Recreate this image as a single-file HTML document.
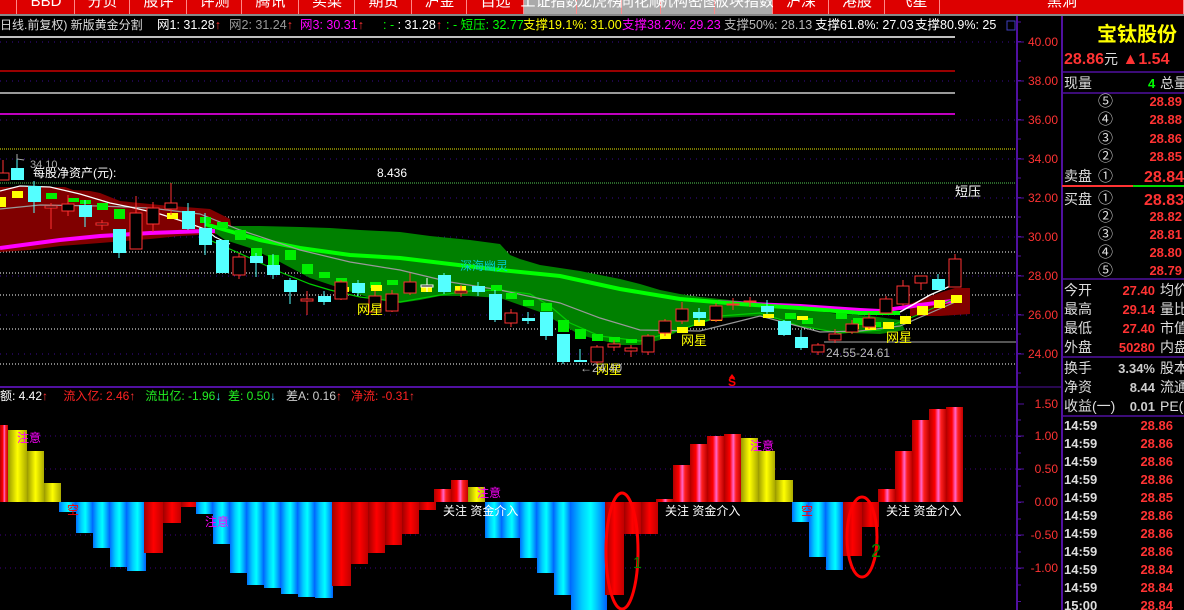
<!DOCTYPE html>
<html><head><meta charset="utf-8"><style>
html,body{margin:0;padding:0;background:#000;width:1184px;height:610px;overflow:hidden}
svg{display:block}
text{font-family:"Liberation Sans","Noto Sans CJK SC",sans-serif}
</style></head><body>
<svg id="s" width="1184" height="610" xmlns="http://www.w3.org/2000/svg">
<defs>
<linearGradient id="gr" x1="0" x2="1" y1="0" y2="0">
<stop offset="0" stop-color="#b00000"/><stop offset="0.35" stop-color="#ff0000"/><stop offset="0.55" stop-color="#ff66cc"/><stop offset="0.7" stop-color="#ff2020"/><stop offset="1" stop-color="#c00000"/></linearGradient>
<linearGradient id="gr2" x1="0" x2="1" y1="0" y2="0">
<stop offset="0" stop-color="#a00000"/><stop offset="0.5" stop-color="#ff0000"/><stop offset="1" stop-color="#c00000"/></linearGradient>
<linearGradient id="gb" x1="0" x2="1" y1="0" y2="0">
<stop offset="0" stop-color="#0070ff"/><stop offset="0.3" stop-color="#00ccff"/><stop offset="0.55" stop-color="#00ffff"/><stop offset="0.8" stop-color="#00aaff"/><stop offset="1" stop-color="#0060ff"/></linearGradient>
<linearGradient id="gy" x1="0" x2="1" y1="0" y2="0">
<stop offset="0" stop-color="#999900"/><stop offset="0.5" stop-color="#ffff00"/><stop offset="1" stop-color="#aaaa00"/></linearGradient>
</defs>
<rect width="1184" height="610" fill="#000"/>
<g id="menu"></g>
<rect x="0" y="14" width="1184" height="2" fill="#888"/>
<g font-size="12.5">
<text x="0" y="29" fill="#ddd" font-size="12">日线.前复权) 新版黄金分割</text>
<text x="157" y="29" fill="#fff">网1: 31.28<tspan fill="#f33">↑</tspan></text>
<text x="229" y="29" fill="#999">网2: 31.24<tspan fill="#f33">↑</tspan></text>
<text x="300" y="29" fill="#f0f">网3: 30.31<tspan fill="#f33">↑</tspan></text>
<text x="383" y="29" fill="#0f0">: - <tspan fill="#fff">: 31.28</tspan><tspan fill="#f33">↑</tspan></text>
<text x="446" y="29" fill="#0f0">: - 短压: 32.77</text>
<text x="523" y="29" fill="#ff0">支撑19.1%: 31.00</text>
<text x="622" y="29" fill="#f0f">支撑38.2%: 29.23</text>
<text x="724" y="29" fill="#bbb">支撑50%: 28.13</text>
<text x="815" y="29" fill="#fff">支撑61.8%: 27.03</text>
<text x="915" y="29" fill="#fff">支撑80.9%: 25</text>
</g>
<rect x="1007" y="21" width="8" height="9" fill="none" stroke="#4040c0"/>
<g id="grid"></g>
<line x1="0" y1="37" x2="955" y2="37" stroke="#fff" stroke-width="1.5"/>
<line x1="0" y1="71" x2="955" y2="71" stroke="#c00" stroke-width="1.5"/>
<line x1="0" y1="93" x2="955" y2="93" stroke="#ccc" stroke-width="1.5"/>
<line x1="0" y1="114" x2="955" y2="114" stroke="#f0f" stroke-width="1.5"/>
<line x1="0" y1="149" x2="1017" y2="149" stroke="#ee0" stroke-dasharray="1,1"/>
<line x1="0" y1="183" x2="1017" y2="183" stroke="#5c5" stroke-dasharray="1,1"/>
<g stroke="#fff" stroke-dasharray="1,2"><line x1="0" y1="217" x2="1017" y2="217"/><line x1="0" y1="252" x2="1017" y2="252"/><line x1="0" y1="273" x2="1017" y2="273"/><line x1="0" y1="295" x2="1017" y2="295"/><line x1="0" y1="329" x2="1017" y2="329"/><line x1="0" y1="364" x2="1017" y2="364"/></g>
<line x1="824" y1="342" x2="1017" y2="342" stroke="#aaa"/>
<polygon fill="#800000" points="0,187 65,187 73,190 90,191 100,193 110,197 120,201 150,204 170,206 185,207 210,209 230,219 232,230 215,234 180,236 150,239 100,243 60,246 30,250 0,252"/>
<polygon fill="#800000" points="910,304 925,298 942,292 955,288 970,288 970,314 940,316 910,316"/>
<polygon fill="#008000" points="205,226 240,226 260,226 300,227 330,228 360,230 400,232 430,236 470,240 500,244 510,255 520,259 540,265 560,268 580,271 600,275 620,279 640,284 660,290 680,294 700,297 730,300 760,303 800,308 830,313 870,316 900,320 905,330 880,334 850,333 820,330 800,325 780,320 760,316 720,318 690,326 660,340 640,345 620,345 600,340 580,335 560,323 540,312 520,305 500,298 470,296 440,296 420,300 400,303 370,298 340,288 310,278 280,262 250,248 225,240"/>
<polyline fill="none" stroke="#f0f" stroke-width="4" points="0,248 30,244 60,240 100,236 150,233 205,231 215,231"/>
<polyline fill="none" stroke="#f0f" stroke-width="4" points="718,302 750,304 800,306 860,310 880,311 920,305 960,300"/>
<polyline fill="none" stroke="#0f0" stroke-width="4" points="205,224 260,240 300,248 350,255 400,258 450,264 500,270 560,276 620,289 680,299 740,304 800,308 860,313 900,313"/>
<polyline fill="none" stroke="#0c0" stroke-width="1.2" points="205,238 250,258 280,272 310,284 330,290 360,297 400,302 440,295 470,291 500,290 530,294 550,306 570,323 600,336 640,341 680,330 720,316 760,313 800,326 840,333 880,330 920,314 960,296"/>
<polyline fill="none" stroke="#999" stroke-width="1.2" points="0,209 40,205 100,206 150,208 200,214 240,230 300,250 350,262 400,270 450,282 500,290 560,303 600,318 640,330 700,331 760,316 820,332 860,331 900,326 960,300"/>
<polyline fill="none" stroke="#fff" stroke-width="1.2" points="0,191 20,186 50,187 80,194 110,203 130,207 160,214 185,222 205,229 215,237 230,244"/>
<polyline fill="none" stroke="#fff" stroke-width="1.5" points="900,312 930,295 955,284"/>
<g id="cand"></g>
<text x="33" y="177" font-size="12" fill="#fff">每股净资产(元):</text>
<text x="377" y="177" font-size="12" fill="#fff">8.436</text>
<text x="30" y="168" font-size="11" fill="#aaa">34.10</text>
<polyline points="17,154 17,159 24,160" stroke="#aaa" fill="none"/>
<text x="955" y="196" font-size="13" fill="#fff">短压</text>
<g font-size="13" fill="#ff0"><text x="357" y="314">网星</text><text x="681" y="345">网星</text><text x="886" y="342">网星</text><text x="596" y="374">网星</text></g>
<text x="826" y="357" font-size="12" fill="#bbb">24.55-24.61</text>
<text x="580" y="372" font-size="12" fill="#bbb">←24.40</text>
<text x="460" y="270" font-size="12" fill="#0cc">深海幽灵</text>
<text x="728" y="386" font-size="12" fill="#f00" font-weight="bold">S</text>
<polygon points="732,374 729,378 735,378" fill="#f00"/>
<line x1="0" y1="387" x2="1017" y2="387" stroke="#5010a0" stroke-width="2"/>
<g stroke="#400080" stroke-dasharray="1,4"><line x1="0" y1="436" x2="1017" y2="436"/><line x1="0" y1="469" x2="1017" y2="469"/><line x1="0" y1="535" x2="1017" y2="535"/><line x1="0" y1="568" x2="1017" y2="568"/></g>
<text y="400" font-size="12" xml:space="preserve"><tspan x="0" fill="#fff">额: 4.42</tspan><tspan fill="#f33">↑</tspan><tspan x="60" fill="#f22"> 流入亿: 2.46</tspan><tspan fill="#f33">↑</tspan><tspan x="142" fill="#2e2"> 流出亿: -1.96</tspan><tspan fill="#4ef">↓</tspan><tspan x="228" fill="#2e2">差: 0.50</tspan><tspan fill="#4ef">↓</tspan><tspan x="286" fill="#ccc">差A: 0.16</tspan><tspan fill="#f33">↑</tspan><tspan x="351" fill="#f22">净流: -0.31</tspan><tspan fill="#f33">↑</tspan></text>
<g id="bars"></g>
<ellipse cx="622" cy="551" rx="16" ry="58" fill="none" stroke="#f00" stroke-width="3"/>
<ellipse cx="862" cy="537" rx="15" ry="40" fill="none" stroke="#f00" stroke-width="3"/>
<text x="633" y="568" font-size="16" fill="#080" font-family="Liberation Serif">1</text>
<text x="871" y="557" font-size="18" fill="#080" font-family="Liberation Serif">2</text>
<g font-size="12" fill="#f0f"><text x="17" y="442">注意</text><text x="205" y="526">注意</text><text x="477" y="497">注意</text><text x="750" y="450">注意</text></g>
<g font-size="12" fill="#fff"><text x="443" y="515">关注 资金介入</text><text x="665" y="515">关注 资金介入</text><text x="886" y="515">关注 资金介入</text></g>
<g font-size="12" fill="#f00"><text x="67" y="514">空</text><text x="801" y="515">空</text></g>
<line x1="1017" y1="16" x2="1017" y2="610" stroke="#5010a0" stroke-width="2"/>
<line x1="1017" y1="387" x2="1062" y2="387" stroke="#5010a0" stroke-width="1"/>
<g id="axis" font-size="12" fill="#f33" text-anchor="end"></g>
<line x1="1062" y1="16" x2="1062" y2="610" stroke="#5010a0" stroke-width="2"/>
<text x="1097" y="41" font-size="20" fill="#ff0" font-weight="bold">宝钛股份</text>
<text x="1064" y="64" font-size="16" fill="#f33" font-weight="bold">28.86<tspan font-weight="normal" fill="#ddd" font-size="14">元</tspan> ▲1.54</text>
<g stroke="#5010a0" stroke-width="1.5"><line x1="1062" y1="72" x2="1184" y2="72"/><line x1="1062" y1="93" x2="1184" y2="93"/><line x1="1062" y1="279" x2="1184" y2="279"/><line x1="1062" y1="357" x2="1184" y2="357"/><line x1="1062" y1="416" x2="1184" y2="416"/></g>
<line x1="1062" y1="186" x2="1133" y2="186" stroke="#f33" stroke-width="2"/><line x1="1133" y1="186" x2="1184" y2="186" stroke="#0d0" stroke-width="2"/>
<g font-size="14" fill="#ddd"><text x="1064" y="88">现量</text><text x="1160" y="88">总量</text><text x="1064" y="181">卖盘</text><text x="1064" y="204">买盘</text>
<text x="1064" y="295">今开</text><text x="1160" y="295">均价</text><text x="1064" y="314">最高</text><text x="1160" y="314">量比</text><text x="1064" y="333">最低</text><text x="1160" y="333">市值</text><text x="1064" y="352">外盘</text><text x="1160" y="352">内盘</text>
<text x="1064" y="373">换手</text><text x="1160" y="373">股本</text><text x="1064" y="392">净资</text><text x="1160" y="392">流通</text><text x="1064" y="411">收益(一)</text><text x="1160" y="411">PE(</text></g>
<text x="1148" y="88" font-size="13" fill="#0f0" font-weight="bold">4</text>
<g id="ob"></g>
<g font-size="13" font-weight="bold" text-anchor="end"><text x="1155" y="295" fill="#f33">27.40</text><text x="1155" y="314" fill="#f33">29.14</text><text x="1155" y="333" fill="#f33">27.40</text><text x="1155" y="352" fill="#f33">50280</text><text x="1155" y="373" fill="#ccc">3.34%</text><text x="1155" y="392" fill="#ccc">8.44</text><text x="1155" y="411" fill="#ccc">0.01</text></g>
<g id="ticks"></g>
</svg>
<script>
var NS="http://www.w3.org/2000/svg";
function el(p,t,a,txt){var e=document.createElementNS(NS,t);for(var k in a)e.setAttribute(k,a[k]);if(txt!=null)e.textContent=txt;document.getElementById(p).appendChild(e);return e;}
var m=[[0,17,"#d00",""],[17,75,"#d00","BBD"],[75,130,"#d00","分负"],[130,187,"#d00","股评"],[187,242,"#d00","评测"],[242,299,"#d00","腾讯"],[299,355,"#d00","买菜"],[355,412,"#d00","期货"],[412,467,"#d00","沪金"],[467,524,"#d00","自选"],[524,577,"#aaa","工证指数"],[577,622,"#aaa","龙虎榜"],[622,661,"#aaa","同花顺"],[661,715,"#aaa","机构密图"],[715,773,"#aaa","板块指数"],[773,829,"#d00","沪深"],[829,885,"#d00","港股"],[885,940,"#d00","飞星"],[940,1184,"#d00","黑洞"]];
m.forEach(function(b){el("menu","rect",{x:b[0],y:0,width:b[1]-b[0]-1,height:14,fill:b[2]});el("menu","rect",{x:b[1]-1,y:0,width:1,height:14,fill:"#f88"});if(b[3])el("menu","text",{x:(b[0]+b[1])/2,y:6,"font-size":15,fill:"#fff","text-anchor":"middle"},b[3]);});
[42,81,120,159,198,237,276,315,354].forEach(function(y){el("grid","line",{x1:0,y1:y,x2:1017,y2:y,stroke:"#3a0a90","stroke-dasharray":"1,5"});});
var ax=[["40.00",42],["38.00",81],["36.00",120],["34.00",159],["32.00",198],["30.00",237],["28.00",276],["26.00",315],["24.00",354],["1.50",404],["1.00",436],["0.50",469],["0.00",502],["-0.50",535],["-1.00",568]];
ax.forEach(function(a){el("axis","text",{x:1058,y:a[1]+4},a[0]);el("ticks","line",{x1:1017,y1:a[1],x2:1024,y2:a[1],stroke:"#5010a0"});});
for(var y=22;y<380;y+=19.5)el("ticks","line",{x1:1017,y1:y,x2:1021,y2:y,stroke:"#5010a0"});
for(var y=420;y<610;y+=16.5)el("ticks","line",{x1:1017,y1:y,x2:1021,y2:y,stroke:"#5010a0"});
var gs=[[29,191,11,3],[46,193,11,6],[68,198,11,4],[80,200,11,4],[97,203,11,7],[114,209,11,10],[200,217,11,6],[217,222,11,6],[235,230,11,10],[251,248,11,10],[268,255,11,10],[285,250,11,10],[302,264,11,10],[319,272,11,6],[336,278,11,6],[370,282,11,6],[387,280,11,5],[491,285,11,6],[506,293,11,6],[523,300,11,6],[541,303,11,8],[558,320,11,12],[575,329,11,10],[592,334,11,7],[609,337,11,5],[626,339,11,4],[785,313,11,6],[802,318,11,6],[836,313,11,6],[853,318,11,7],[870,322,11,5]];
gs.forEach(function(s){el("cand","rect",{x:s[0],y:s[1],width:s[2],height:s[3],fill:"#00ee00"});});
var ys=[[0,197,6,10],[12,191,11,7],[167,213,11,6],[338,287,11,5],[371,285,11,6],[421,287,11,5],[438,285,11,6],[455,286,11,6],[660,333,11,6],[677,327,11,6],[694,320,11,6],[711,315,11,6],[763,314,11,4],[797,316,11,4],[848,324,11,5],[865,325,11,5],[883,322,11,7],[900,316,11,8],[917,306,11,9],[934,300,11,8],[951,295,11,8]];
ys.forEach(function(s){el("cand","rect",{x:s[0],y:s[1],width:s[2],height:s[3],fill:"#ffff00"});});
var c=[[3,173,180,160,180,"r"],[17,168,180,158,180,"c"],[34,186,202,181,213,"c"],[51,206,208,203,229,"r"],[68,204,211,195,216,"r"],[85,205,217,200,227,"c"],[102,223,225,220,230,"r"],[119,229,253,229,258,"c"],[136,213,249,196,249,"r"],[153,208,224,202,232,"r"],[171,203,209,183,215,"r"],[188,211,229,203,230,"c"],[205,228,245,213,255,"c"],[222,240,273,240,273,"c"],[239,257,275,253,279,"r"],[256,256,263,253,277,"c"],[273,265,275,254,279,"c"],[290,280,292,278,304,"c"],[307,299,301,291,315,"r"],[324,296,302,291,305,"c"],[341,282,299,280,300,"r"],[358,283,293,280,296,"c"],[375,296,312,291,313,"r"],[392,294,311,290,312,"r"],[410,282,293,273,295,"r"],[427,285,287,278,292,"w"],[444,275,292,273,294,"c"],[461,291,293,285,297,"r"],[478,286,292,282,296,"c"],[495,294,320,290,322,"c"],[511,313,323,309,327,"r"],[528,318,321,312,324,"c"],[546,312,336,312,340,"c"],[563,334,362,334,364,"c"],[580,360,362,349,362,"c"],[597,347,362,345,364,"r"],[614,344,347,340,351,"r"],[631,348,351,345,357,"r"],[648,336,352,334,355,"r"],[665,321,333,319,336,"r"],[682,309,321,302,324,"r"],[699,312,318,308,322,"c"],[716,306,320,303,322,"r"],[733,304,305,298,310,"r"],[750,301,302,297,307,"r"],[767,306,312,300,314,"c"],[784,321,335,320,336,"c"],[801,337,348,330,350,"c"],[818,345,352,343,355,"r"],[835,334,340,329,343,"r"],[852,324,332,320,334,"r"],[869,318,327,313,329,"r"],[886,299,313,296,314,"r"],[903,286,304,280,306,"r"],[921,276,283,276,290,"r"],[938,279,290,274,290,"c"],[955,259,287,254,287,"r"]];
c.forEach(function(d){var col=d[5]=="r"?"#ff3232":(d[5]=="c"?"#54ffff":"#fff");el("cand","line",{x1:d[0],y1:d[3],x2:d[0],y2:d[4],stroke:col});var h=Math.max(1,d[2]-d[1]);if(d[5]=="c")el("cand","rect",{x:d[0]-6,y:d[1],width:13,height:h,fill:col});else el("cand","rect",{x:d[0]-6,y:d[1],width:12,height:h,fill:"#000",stroke:col});});
var Z=502;var b=[[0,8,425,"r"],[8,27,430,"y"],[27,44,451,"y"],[44,61,483,"y"],[59,76,512,"b"],[76,93,533,"b"],[93,110,548,"b"],[110,127,567,"b"],[127,146,571,"b"],[144,163,553,"d"],[163,181,523,"d"],[181,198,507,"d"],[196,213,514,"b"],[213,230,544,"b"],[230,247,573,"b"],[247,264,585,"b"],[264,281,588,"b"],[281,298,594,"b"],[298,315,597,"b"],[315,333,598,"b"],[332,351,586,"d"],[351,368,564,"d"],[368,385,553,"d"],[385,402,545,"d"],[402,419,534,"d"],[419,436,510,"d"],[434,451,489,"r"],[451,468,480,"r"],[468,485,487,"y"],[485,502,538,"b"],[502,520,538,"b"],[520,537,558,"b"],[537,554,573,"b"],[554,571,595,"b"],[571,607,610,"b"],[605,624,595,"d"],[624,641,534,"d"],[641,658,534,"d"],[656,673,499,"r"],[673,690,465,"r"],[690,707,444,"r"],[707,724,436,"r"],[724,741,434,"r"],[741,758,438,"y"],[758,775,451,"y"],[775,793,480,"y"],[792,809,522,"b"],[809,826,557,"b"],[826,843,570,"b"],[843,862,556,"d"],[862,879,527,"d"],[878,895,489,"r"],[895,912,451,"r"],[912,929,420,"r"],[929,946,409,"r"],[946,963,407,"r"]];
var f={r:"url(#gr)",d:"url(#gr2)",b:"url(#gb)",y:"url(#gy)"};
b.forEach(function(d){var y1=Math.min(Z,d[2]),y2=Math.max(Z,d[2]);el("bars","rect",{x:d[0],y:y1,width:d[1]-d[0],height:Math.max(1,y2-y1),fill:f[d[3]]});});
var sell=[["⑤","28.89",106],["④","28.88",124],["③","28.86",143],["②","28.85",161]];
var buy=[["②","28.82",221],["③","28.81",239],["④","28.80",257],["⑤","28.79",275]];
sell.concat(buy).forEach(function(r){el("ob","text",{x:1098,y:r[2],"font-size":15,fill:"#ddd"},r[0]);el("ob","text",{x:1182,y:r[2],"font-size":13,fill:"#f33","font-weight":"bold","text-anchor":"end"},r[1]);});
el("ob","text",{x:1098,y:181,"font-size":15,fill:"#ddd"},"①");el("ob","text",{x:1184,y:182,"font-size":16,fill:"#f33","font-weight":"bold","text-anchor":"end"},"28.84");
el("ob","text",{x:1098,y:203,"font-size":15,fill:"#ddd"},"①");el("ob","text",{x:1184,y:205,"font-size":16,fill:"#f33","font-weight":"bold","text-anchor":"end"},"28.83");
var tp=["28.86","28.86","28.86","28.86","28.85","28.86","28.86","28.86","28.84","28.84","28.84"];
tp.forEach(function(p,i){var y=430+i*18;el("ob","text",{x:1064,y:y,"font-size":13,fill:"#ddd","font-weight":"bold"},i==10?"15:00":"14:59");el("ob","text",{x:1173,y:y,"font-size":13,fill:"#f33","font-weight":"bold","text-anchor":"end"},p);});
</script>
</body></html>
